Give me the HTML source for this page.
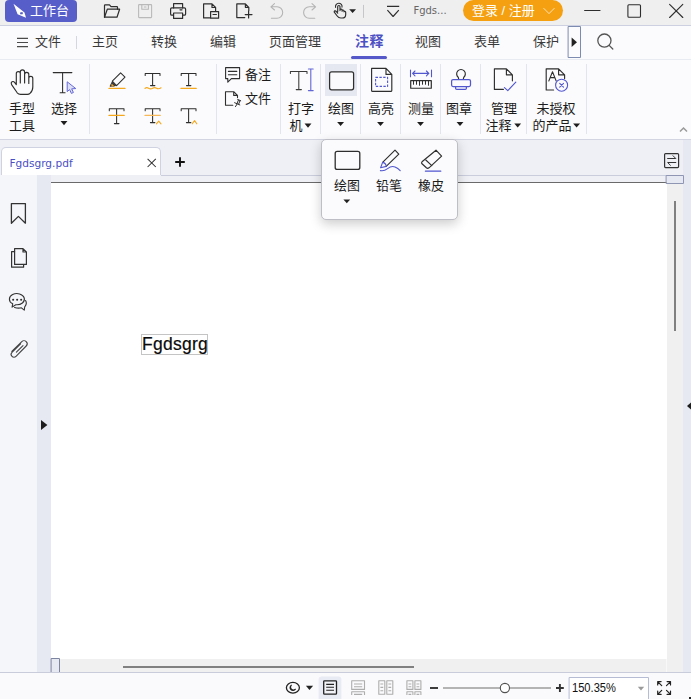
<!DOCTYPE html>
<html lang="zh-CN">
<head>
<meta charset="utf-8">
<title>Fgdsgrg.pdf</title>
<style>
*{box-sizing:border-box;margin:0;padding:0}
html,body{width:691px;height:699px;overflow:hidden;background:#fbfbfd}
body{font-family:"Liberation Sans","Noto Sans CJK SC",sans-serif;font-size:13px;color:#1c1c1c;position:relative}
.abs{position:absolute}
svg{position:absolute;overflow:visible}
.t{position:absolute;white-space:nowrap;line-height:17px;font-size:13px}
.c{text-align:center}
/* title bar */
#title{left:0;top:0;width:691px;height:26px;background:#efeff0;border-bottom:1px solid #ccd0e0}
#work{left:5px;top:0;width:72px;height:22px;border-radius:4px;background:#585ec9}
#login{left:463px;top:0;width:100px;height:21px;border-radius:10.5px;background:#f5a011}
/* menu */
#menu{left:0;top:26px;width:691px;height:34px;background:#fbfbfd;border-bottom:1px solid #e9ebf2}
.m{top:33px;color:#3a3a3a}
/* ribbon */
#ribbon{left:0;top:60px;width:691px;height:80px;background:#fbfbfd;border-bottom:1px solid #d3d6e2}
.sep{position:absolute;top:64px;width:1px;height:70px;background:#e3e5ee}
.arr{position:absolute;width:0;height:0;margin-left:-.4px;border-left:3.9px solid transparent;border-right:3.9px solid transparent;border-top:4.6px solid #1e1e1e}
/* tabbar */
#tabbar{left:0;top:140px;width:683px;height:35px;background:#eef0f6}
#tab{left:1px;top:147px;width:160px;height:28px;background:#fff;border:1px solid #cfd2e0;border-bottom:none;border-radius:5px 5px 0 0}
#rstrip{left:683px;top:140px;width:8px;height:533px;background:#e6e8f2}
#side{left:0;top:175px;width:37px;height:498px;background:#f5f6fa}
#lstrip{left:37px;top:175px;width:14px;height:498px;background:#e6e8f2}
#gap{left:51px;top:175px;width:632px;height:8px;background:#eff0f5}
#gapline{left:161px;top:175px;width:522px;height:1px;background:#c9cddc}
#page{left:51px;top:182px;width:616px;height:477px;background:#fff;border-top:1px solid #6a6a6a}
#vtrack{left:667px;top:183px;width:16px;height:476px;background:#f0f0f0}
#htrack{left:51px;top:659px;width:615px;height:13px;background:#f0f0f0}
#corner{left:666px;top:659px;width:17px;height:13px;background:#f0f0f0;border-left:1px solid #f8f8f8}
#status{left:0;top:672px;width:691px;height:27px;background:#fafafc;border-top:1px solid #c9cddb}
#popup{left:321px;top:139px;width:137px;height:81px;background:#fbfbfd;border:1px solid #bebec6;border-radius:5px;box-shadow:0 4px 12px rgba(0,0,0,.2)}
</style>
</head>
<body>
<!-- TITLE BAR -->
<div id="title" class="abs"></div>
<div id="work" class="abs"></div>
<svg style="left:13px;top:4px" width="14" height="14" viewBox="0 0 14 14"><path d="M0.5 -0.2 L11.5 8.4 L13 13.8 L4.6 10.2 Z M8.4 8.2 A1.1 1.1 0 1 0 8.5 10.3 A1.1 1.1 0 1 0 8.4 8.2 Z" fill="#fff" fill-rule="evenodd"/></svg>
<div class="t" style="left:30px;top:2px;color:#fff;font-size:13px">工作台</div>
<div id="login" class="abs"></div>
<div class="t" style="left:472px;top:1.7px;color:#fff">登录 / 注册</div>
<div class="t" style="left:413.4px;top:2.3px;font-family:'DejaVu Sans','Liberation Sans',sans-serif;font-size:10px;color:#666">Fgds...</div>


<!-- title icons -->
<svg style="left:0;top:0" width="691" height="25" viewBox="0 0 691 25" fill="none" stroke="#2e2e2e" stroke-width="1.2" stroke-linejoin="round" stroke-linecap="round">
<!-- folder -->
<path d="M104.5 17.2 V5.6 Q104.5 4.9 105.2 4.9 H109.5 L111 6.6 H116.8 Q117.5 6.6 117.5 7.3 V9.2"/>
<path d="M104.5 17.2 L107.3 9.2 H119.6 L117 17.2 Z"/>
<!-- save (disabled) -->
<g stroke="#b9b9b9" stroke-width="1.1"><rect x="138.6" y="4.6" width="13" height="13" rx=".6"/><path d="M141.8 4.6 V9.3 H148.4 V4.6 M144.3 7 H146"/></g>
<!-- printer -->
<path d="M173.6 8 V3.6 H182.6 V8"/>
<rect x="170.6" y="7.8" width="15" height="7.4" rx="1.3"/>
<rect x="173.6" y="13" width="9" height="5.4" fill="#efeff0"/>
<path d="M180 9.8 H182"/>
<!-- doc tag -->
<path d="M209.8 17.9 H203.6 V3.9 H212 L215.6 7.5 V10.8 M212 3.9 V7.5 H215.6"/>
<rect x="210.6" y="11.6" width="8" height="6.6" fill="#efeff0"/>
<path d="M213 14.5 H216.4"/>
<!-- new doc -->
<path d="M244.8 17.6 H236.8 V3.9 H245.4 L248.8 7.3 V10.6 M245.4 3.9 V7.3 H248.8"/>
<path d="M248.6 11.2 V18 M245.2 14.6 H252"/>
<!-- undo -->
<g stroke="#b4b4b4" stroke-width="1.1"><path d="M274.5 3.6 L270.9 6.8 L274.5 10 M271.2 6.8 H277 A5.7 5.7 0 0 1 277 18.2 H271.4"/></g>
<!-- redo -->
<g stroke="#b4b4b4" stroke-width="1.1"><path d="M312 3.6 L315.6 6.8 L312 10 M315.3 6.8 H309.3 A5.7 5.7 0 0 0 309.3 18.2 H314.8"/></g>
<!-- hand pointer -->
<path d="M337.7 11.6 V6.6 A1.15 1.15 0 0 1 340 6.6 V10.6 M340 9.8 A1.1 1.1 0 0 1 342.1 9.9 V11.2 M342.1 10.6 A1 1 0 0 1 344 10.8 V11.8 M344 11.4 Q345.7 11 345.7 12.6 V14.4 Q345.7 18 342.2 18 H340.8 Q338.6 18 337.2 16 L334.3 12.2 Q333.9 11.2 334.9 10.9 Q335.7 10.7 336.4 11.6 L337.7 13.2" stroke-width="1.15"/>
<path d="M335.6 7.4 A3.3 3.3 0 1 1 342 7.2" stroke-width="1.1"/>
<path d="M349.2 9.2 H356 L352.6 13.1 Z" fill="#222" stroke="none"/>
<path d="M363.5 5.3 V17.5" stroke="#c6c6c8" stroke-width="1"/>
<!-- customise chevron -->
<path d="M387 6.3 H399.2 M387.4 10.2 L393.1 16.5 L398.8 10.2" stroke-width="1.15" stroke-linecap="butt"/>
<!-- window buttons -->
<path d="M584.6 10.5 H600" stroke-width="1.1"/>
<rect x="627.9" y="4.7" width="12.6" height="12.6" rx="1" stroke-width="1.1"/>
<path d="M669.6 4.3 L682.8 17.5 M682.8 4.3 L669.6 17.5" stroke-width="1.1"/>
<!-- login chevron -->
<path d="M543.8 8.4 L549 13.6 L554.2 8.4" stroke="#fde3b4" stroke-width="1"/>
</svg>

<!-- MENU -->
<div id="menu" class="abs"></div>
<div class="t m" style="left:35px">文件</div>
<div class="t m" style="left:92px">主页</div>
<div class="t m" style="left:151px">转换</div>
<div class="t m" style="left:210px">编辑</div>
<div class="t m" style="left:269px">页面管理</div>
<div class="t m" style="left:355px;top:32.8px;font-size:14px;letter-spacing:.4px;color:#4c50c4;font-weight:bold">注释</div>
<div class="t m" style="left:415px">视图</div>
<div class="t m" style="left:474px">表单</div>
<div class="t m" style="left:533px">保护</div>
<div class="abs" style="left:351px;top:56px;width:36px;height:3px;border-radius:2px;background:#5558c8"></div>
<div class="abs" style="left:76px;top:36px;width:1px;height:13px;background:#d5d7e0"></div>

<!-- RIBBON -->
<div id="ribbon" class="abs"></div>
<div class="sep" style="left:89px"></div>
<div class="sep" style="left:216px"></div>
<div class="sep" style="left:280px"></div>
<div class="sep" style="left:320px"></div>
<div class="sep" style="left:360px"></div>
<div class="sep" style="left:400px"></div>
<div class="sep" style="left:440px"></div>
<div class="sep" style="left:480px"></div>
<div class="sep" style="left:526px"></div>
<div class="sep" style="left:586px"></div>
<div class="abs" style="left:325px;top:64px;width:32px;height:32px;background:#e6e8f1"></div>

<div class="t c" style="left:2px;width:40px;top:101.3px;line-height:16.5px">手型<br>工具</div>
<div class="t c" style="left:44px;width:40px;top:101.3px;line-height:16.5px">选择</div>
<div class="t" style="left:245px;top:66px">备注</div>
<div class="t" style="left:245px;top:90px">文件</div>
<div class="t c" style="left:281px;width:40px;top:101.3px;line-height:16.5px">打字<br><span style="position:relative;left:-5px">机</span></div>
<div class="t c" style="left:321px;width:40px;top:101.3px;line-height:16.5px">绘图</div>
<div class="t c" style="left:361px;width:40px;top:101.3px;line-height:16.5px">高亮</div>
<div class="t c" style="left:401px;width:40px;top:101.3px;line-height:16.5px">测量</div>
<div class="t c" style="left:439px;width:40px;top:101.3px;line-height:16.5px">图章</div>
<div class="t c" style="left:484px;width:40px;top:101.3px;line-height:16.5px">管理<br><span style="position:relative;left:-5.5px">注释</span></div>
<div class="t c" style="left:531px;width:50px;top:101.3px;line-height:16.5px">未授权<br><span style="position:relative;left:-4px">的产品</span></div>



<!-- ribbon icons -->
<svg style="left:0;top:60px" width="691" height="80" viewBox="0 60 691 80" fill="none" stroke="#2e2e2e" stroke-width="1.1" stroke-linejoin="round" stroke-linecap="round">
<!-- hand -->
<path d="M16.3 84.6 V73.6 A2 2 0 0 1 20.3 73.6 V83 M20.3 73.6 V72 A2.1 2.1 0 0 1 24.6 72 V83 M24.6 74.4 A2.1 2.1 0 0 1 28.8 74.4 V83.4 M28.8 78.4 A2 2 0 0 1 32.8 78.4 V87 Q32.8 91 30 93.4 Q29 94.4 27.4 94.4 H20.6 Q18.6 94.4 17.2 92.8 L11.6 84.6 Q10.6 82.8 12 81.8 Q13.4 81 14.6 82.4 L16.3 84.6" stroke-width="1.15"/>
<!-- select T + cursor -->
<path d="M53.2 72.6 H71.9 M62.6 72.6 V92.7 M60.1 92.7 H65.1" stroke-width="1.05"/>
<path d="M67.2 82.2 V91.6 L69.6 89.6 L71.4 93.4 L73.4 92.5 L71.7 88.8 L75.4 88.6 Z" fill="#dcdef6" stroke="#6569d6" stroke-width="1"/>
<!-- markup icons -->
<g stroke-width="1.05">
<path d="M120.6 72.8 L125 77.2 L116.6 85.6 L112.3 81.2 Z"/>
<path d="M112.3 81.6 L110 86.3 H113.4 L116.2 85.4" fill="#3a3a3a" stroke-width=".8"/>
<path d="M112 84.3 L113.6 86 L112 86.3 Z" fill="#f5a623" stroke="#f5a623" stroke-width=".6"/>
<path d="M109 88.4 H125" stroke="#f5a81c" stroke-width="1.3"/>
<path d="M145.2 75.4 V73.4 H160 V75.4 M152.6 73.4 V85.6 M150.5 85.6 H154.9"/>
<path d="M145 88.4 Q146.6 86.9 148.6 88.2 T152.6 88.2 T156.6 88.2 T161 87.8" stroke="#f5a81c" stroke-width="1.2"/>
<path d="M181.2 75.4 V73.4 H196 V75.4 M188.6 73.4 V85.6 M186.5 85.6 H190.9"/>
<path d="M181 88.4 H196.2" stroke="#f5a81c" stroke-width="1.3"/>
<path d="M109.3 110.8 V108.8 H124 V110.8 M116.6 108.8 V123.6 M114.4 123.6 H119"/>
<path d="M109 115.4 H124.2" stroke="#f5a81c" stroke-width="1.3"/>
<path d="M145.2 110.8 V108.8 H160 V110.8 M152.6 108.8 V122.6 M150.4 122.6 H154.9"/>
<path d="M145 115.4 H160.2" stroke="#f7b85a" stroke-width="1.3"/>
<path d="M156.4 123.8 L158.7 121.1 L161 123.8" stroke="#f5a81c" stroke-width="1.1"/>
<path d="M181.2 110.8 V108.8 H196 V110.8 M188.6 108.8 V122.6 M186.4 122.6 H190.9"/>
<path d="M192.2 123.8 L194.5 120.6 L196.8 123.8" stroke="#f5a81c" stroke-width="1.1"/>
</g>
<!-- comment / file -->
<path d="M225.6 67.6 H239.6 V78.6 H231.4 L227.8 82.2 V78.6 H225.6 Z M228.4 71.4 H236.8 M228.4 74.8 H236.8"/>
<path d="M232.8 105.3 H225.5 V91.7 H233.7 L237.5 95.4 V97.6 M233.7 91.7 V95.4 H237.5"/>
<path d="M237.7 99.5 L240.7 100.8 M238.5 100 L237.1 103.2 M240 100.7 L238.7 104 M234.6 102.7 L239.8 104.9 M237.1 104 L235.5 106.6" stroke-width="1"/>
<!-- typewriter -->
<path d="M290.4 73.4 V71.4 H307 V73.4 M298.8 71.4 V89.6 M296.2 89.6 H301.4" stroke="#3a3a3a" stroke-width="1.05"/>
<path d="M308.4 69 H313.2 M310.8 69 V90.6 M308.4 90.6 H313.2" stroke="#6266d4" stroke-width="1.1"/>
<!-- draw rect -->
<rect x="329.6" y="71.8" width="24" height="18" rx="2" stroke-width="1.25" fill="#fafafc"/>
<!-- highlight area -->
<path d="M371.6 68.4 H386 L391.8 74.4 V90.4 Q391.8 91.4 390.8 91.4 H372.6 Q371.6 91.4 371.6 90.4 Z M386 68.4 V74.4 H391.8" stroke-width="1.15"/>
<rect x="375.6" y="77.4" width="12" height="9" stroke="#5257cf" stroke-width="1.1" stroke-dasharray="2.4 1.4" stroke-linecap="butt"/>
<!-- measure -->
<g stroke="#5257cf" stroke-width="1.1"><path d="M410.5 70 V76.8 M431.5 70 V76.8 M412.6 73.4 H428.8 M415 71 L412.6 73.4 L415 75.8 M426.4 71 L428.8 73.4 L426.4 75.8"/></g>
<rect x="410.7" y="80.65" width="20.6" height="7.6" stroke-width="1.2"/>
<path d="M413.5 80.6 V84.7 M416.5 80.6 V84.7 M419.5 80.6 V85.7 M422.5 80.6 V84.7 M425.5 80.6 V84.7 M428.5 80.6 V85.7" stroke-width="1" stroke-linecap="butt"/>
<!-- stamp -->
<path d="M458.7 79.2 L458.2 77.2 A4.35 4.35 0 1 1 463.8 77.2 L463.3 79.2" stroke="#2e2e2e" stroke-width="1.15"/><g stroke="#5257cf" stroke-width="1.25"><rect x="451.6" y="79.5" width="18.9" height="7" rx="1.5"/><path d="M455.6 86.6 V88.2 Q455.6 89.4 456.8 89.4 H465.2 Q466.4 89.4 466.4 88.2 V86.6"/></g>
<!-- manage comments -->
<path d="M503.4 89.4 H494.4 V68.8 H506.4 L512.4 74.8 V80.8 M506.4 68.8 V74.8 H512.4" stroke-width="1.15"/>
<path d="M504.4 87.6 L507.8 90.6 L515.8 82.2" stroke="#5257cf" stroke-width="1.15"/>
<!-- unlicensed -->
<path d="M553.6 90 H546.2 V68.8 H558.6 L564.6 74.8 V78.6 M558.6 68.8 V74.8 H564.6" stroke-width="1.15"/>
<path d="M548.8 81 L552.5 71.8 L556.2 81 M550.2 77.6 H554.8" stroke-width="1.05"/>
<circle cx="561.6" cy="85.2" r="6" fill="#fbfbfd" stroke="#5257cf" stroke-width="1.1"/>
<path d="M559.7 83.3 L563.5 87.1 M563.5 83.3 L559.7 87.1" stroke="#5257cf" stroke-width="1.1"/>
<g fill="#1e1e1e" stroke="none"><path d="M60.55 121.00 H67.45 L64.00 125.20 Z"/><path d="M304.55 123.60 H311.45 L308.00 127.80 Z"/><path d="M337.15 121.90 H344.05 L340.60 126.10 Z"/><path d="M377.05 121.90 H383.95 L380.50 126.10 Z"/><path d="M417.05 121.90 H423.95 L420.50 126.10 Z"/><path d="M456.55 121.90 H463.45 L460.00 126.10 Z"/><path d="M514.25 123.40 H521.15 L517.70 127.60 Z"/><path d="M573.15 123.40 H580.05 L576.60 127.60 Z"/></g>
<!-- collapse chevron -->
<path d="M680 131.6 L683.5 128 L687 131.6" stroke="#9a9a9a" stroke-width="1.5" stroke-linecap="butt" stroke-linejoin="miter"/>
</svg>

<!-- TAB BAR + DOC -->
<div id="tabbar" class="abs"></div>
<div id="rstrip" class="abs"></div>
<div id="gap" class="abs"></div><div id="gapline" class="abs"></div>
<div id="side" class="abs"></div>
<div id="lstrip" class="abs"></div>
<div id="page" class="abs"></div>
<div id="vtrack" class="abs"></div>
<div id="htrack" class="abs"></div>
<div id="corner" class="abs"></div>
<div id="tab" class="abs"></div>
<div class="t" style="left:9.4px;top:155px;font-family:'DejaVu Sans','Liberation Sans',sans-serif;font-size:10.6px;color:#4a4fc5">Fgdsgrg.pdf</div>


<!-- menu extras -->
<svg style="left:0;top:26px" width="691" height="34" viewBox="0 26 691 34" fill="none" stroke="#333" stroke-width="1.1" stroke-linecap="round" stroke-linejoin="round">
<path d="M17 38.4 H28 M17 42.5 H28 M17 46.6 H28" stroke="#4a4a4a" stroke-width="1.1" stroke-linecap="butt"/>
<rect x="568.5" y="26.5" width="12" height="31" fill="#fbfbfd" stroke="#7d8bb0" stroke-width="1"/>
<path d="M571.6 37.4 L577 42.2 L571.6 47 Z" fill="#222" stroke="none"/>
<circle cx="604.4" cy="40.6" r="6.6" stroke="#555" stroke-width="1.3"/>
<path d="M609.2 45.4 L612.8 49" stroke="#555" stroke-width="1.3"/>
</svg>

<!-- tab bar extras -->
<svg style="left:0;top:140px" width="691" height="533" viewBox="0 140 691 533" fill="none" stroke="#333" stroke-width="1.2" stroke-linecap="round" stroke-linejoin="round">
<path d="M147.6 158.8 L155.8 167 M155.8 158.8 L147.6 167" stroke="#333" stroke-width="1.05" stroke-linecap="butt"/>
<path d="M175.2 162 H184.8 M180 157.2 V166.8" stroke="#111" stroke-width="1.9" stroke-linecap="butt"/>
<!-- swap -->
<rect x="664.6" y="153.6" width="14" height="14" rx="1" stroke-width="1.2"/>
<path d="M667.6 158.5 H675.8 L673 155.7 M675.8 162.5 H667.6 L670.4 165.3" stroke-width="1"/>
<!-- small boxes -->
<rect x="666.5" y="175.5" width="17" height="8" fill="#e6e8f2" stroke="#8f96b4" stroke-width="1"/>
<rect x="51.5" y="658.5" width="8" height="14" fill="#e6e8f2" stroke="#7d84a0" stroke-width="1"/>
<!-- scroll thumbs -->
<rect x="674" y="201" width="2" height="130" fill="#808080" stroke="none"/>
<rect x="123" y="666" width="291" height="2" fill="#808080" stroke="none"/>
<!-- side arrows -->
<path d="M41 420 L47.4 425 L41 430 Z" fill="#1e1e1e" stroke="none"/>
<path d="M691 402.6 L687 406 L691 409.4 Z" fill="#1e1e1e" stroke="none"/>
<!-- sidebar icons -->
<path d="M11.4 203.6 H25.4 V223.2 L18.4 216.4 L11.4 223.2 Z" stroke-width="1.3"/>
<path d="M14.6 248.6 H23 L26.4 252 V264.4 H14.6 Z M23 248.6 V252 H26.4" stroke-width="1.2"/>
<path d="M14.6 251.6 H11.6 V267.2 H23.6 V264.6" stroke-width="1.2"/>
<path d="M12.1 307.1 L12.7 303.8 A7.5 5.6 0 1 1 15.8 304.7 Z" stroke-width="1.1"/>
<path d="M25.6 300.6 Q27.4 303.8 24.7 306.8 L24.3 310.2 L21.4 307.8 Q18 308.6 14.6 307.4" stroke-width="1.1"/>
<path d="M13.1 299.7 h.1 M17.1 299.7 h.1 M21.1 299.7 h.1" stroke-width="2"/>
<path d="M11.8 351.4 L21.8 341.6 A3.1 3.1 0 0 1 26.2 346 L16 356.4 A2.8 2.8 0 0 1 12 352.4 L20.6 343.8 M16.4 352.2 L23 345.6" stroke="#444" stroke-width="1.1"/>
</svg>
<!-- document text -->
<div class="abs" style="left:141px;top:334px;width:67px;height:21px;border:1px solid #c4c4c4;background:#fff"></div>
<div class="t" id="doctext" style="left:142px;top:332px;font-size:17.5px;line-height:24px;letter-spacing:.25px;color:#0a0a0a;-webkit-text-stroke:.2px #0a0a0a;transform-origin:0 0">Fgdsgrg</div>

<!-- STATUS -->
<div id="status" class="abs"></div>
<svg style="left:0;top:673px" width="691" height="26" viewBox="0 673 691 26" fill="none" stroke="#222" stroke-width="1.2" stroke-linecap="round" stroke-linejoin="round">
<path d="M318.6 699 V679.4 Q318.6 676.4 321.6 676.4 H338.4 Q341.4 676.4 341.4 679.4 V699 Z" fill="#e8eaf4" stroke="none"/>
<!-- night mode -->
<ellipse cx="292.9" cy="687.8" rx="6.5" ry="5.4" stroke-width="1.3"/>
<path d="M291.4 685.2 A2.9 2.9 0 1 0 295.4 689.2 A2.7 2.7 0 0 1 291.4 685.2 Z" stroke-width="1.1"/>
<path d="M305.9 685.8 H313.1 L309.5 690 Z" fill="#222" stroke="none"/>
<!-- single page -->
<rect x="323.7" y="680.8" width="12.8" height="13.4" rx=".8" stroke-width="1.3" fill="#f1f2f8"/>
<path d="M326.2 684.4 H334 M326.2 687.3 H334 M326.2 690.2 H334" stroke-width="1.1" stroke-linecap="butt"/>
<g stroke="#adadad" stroke-width="1.1" stroke-linecap="butt">
<rect x="351.7" y="680.8" width="12.8" height="8.6"/>
<path d="M354 684 H362.2 M354 686.8 H362.2 M351.7 695 V691.8 H364.5 V695 M354 694.4 H362.2"/>
<rect x="378.8" y="680.8" width="6" height="13.4"/><rect x="386.8" y="680.8" width="6" height="13.4"/>
<path d="M380.4 684 H383.2 M380.4 687.4 H383.2 M380.4 690.8 H383.2 M388.4 684 H391.2 M388.4 687.4 H391.2 M388.4 690.8 H391.2"/>
<rect x="406.9" y="680.8" width="6" height="8.6"/><rect x="414.9" y="680.8" width="6" height="8.6"/>
<path d="M408.5 684 H411.3 M408.5 686.8 H411.3 M416.5 684 H419.3 M416.5 686.8 H419.3 M406.9 695 V691.8 H412.9 V695 M414.9 695 V691.8 H420.9 V695 M408.5 694.4 H411.3 M416.5 694.4 H419.3"/>
</g>
<!-- zoom slider -->
<path d="M430 688 H438" stroke="#333" stroke-width="1.9" stroke-linecap="butt"/>
<path d="M443 688 H551" stroke="#b4b4b4" stroke-width="2" stroke-linecap="butt"/>
<circle cx="504.9" cy="688" r="4.6" fill="#fff" stroke="#505050" stroke-width="1.1"/>
<path d="M556 688 H563.8 M559.9 684.1 V691.9" stroke="#333" stroke-width="1.9" stroke-linecap="butt"/>
<!-- combo -->
<rect x="569.5" y="677.5" width="79" height="23" fill="#fff" stroke="#b6bcd4" stroke-width="1"/>
<path d="M637.8 686.8 H644.2 L641 690.4 Z" fill="#9a9a9a" stroke="none"/>
<!-- fullscreen -->
<g stroke-width="1.2"><path d="M657.7 685 V681.6 H661.1 M657.9 681.8 L661.7 685.6 M667.1 681.6 H670.5 V685 M670.3 681.8 L666.5 685.6 M657.7 691 V694.4 H661.1 M657.9 694.2 L661.7 690.4 M670.5 691 V694.4 H667.1 M670.3 694.2 L666.5 690.4"/></g>
</svg>
<div class="t" id="zoomtxt" style="left:572px;top:680px;font-size:12.5px;line-height:17px;color:#111;transform-origin:0 0;transform:scaleX(.89)">150.35%</div>


<div class="abs" style="left:689px;top:697px;width:2px;height:2px;background:#222"></div>
<!-- POPUP -->
<div id="popup" class="abs"></div>
<svg style="left:322px;top:140px" width="136" height="80" viewBox="322 140 136 80" fill="none" stroke="#2e2e2e" stroke-width="1.15" stroke-linecap="round" stroke-linejoin="round">
<rect x="335.2" y="151.4" width="24.6" height="18" rx="2" stroke-width="1.3"/>
<path d="M343.4 199.4 H350.2 L346.8 203.2 Z" fill="#222" stroke="none"/>
<!-- pencil -->
<path d="M382.6 162.4 L395 150.2 L398.8 154.2 L386.2 166.4"/>
<path d="M382.6 162.4 L380.6 167.8 L386.2 166.4 Q386 163 382.6 162.4 Z" stroke="#5257cf" stroke-width="1.1"/>
<path d="M380.4 170.6 Q384 171.4 387.6 168.6 Q391.4 165.6 395 167 Q398 168.2 400.2 170.6" stroke="#5257cf" stroke-width="1.1"/>
<!-- eraser -->
<path d="M436 150.2 L441.6 156.2 L429 167.8 Q427.6 168.8 426.4 167.8 L422 163.8 Q421 162.8 422 161.8 Z"/>
<path d="M425.8 160 L431.8 165.6"/>
<path d="M425.4 171.2 H440.8" stroke="#5257cf" stroke-width="1.2"/>
</svg>
<div class="t c" style="left:327px;width:40px;top:177px">绘图</div>
<div class="t c" style="left:369px;width:40px;top:177px">铅笔</div>
<div class="t c" style="left:411px;width:40px;top:177px">橡皮</div>

</body>
</html>
